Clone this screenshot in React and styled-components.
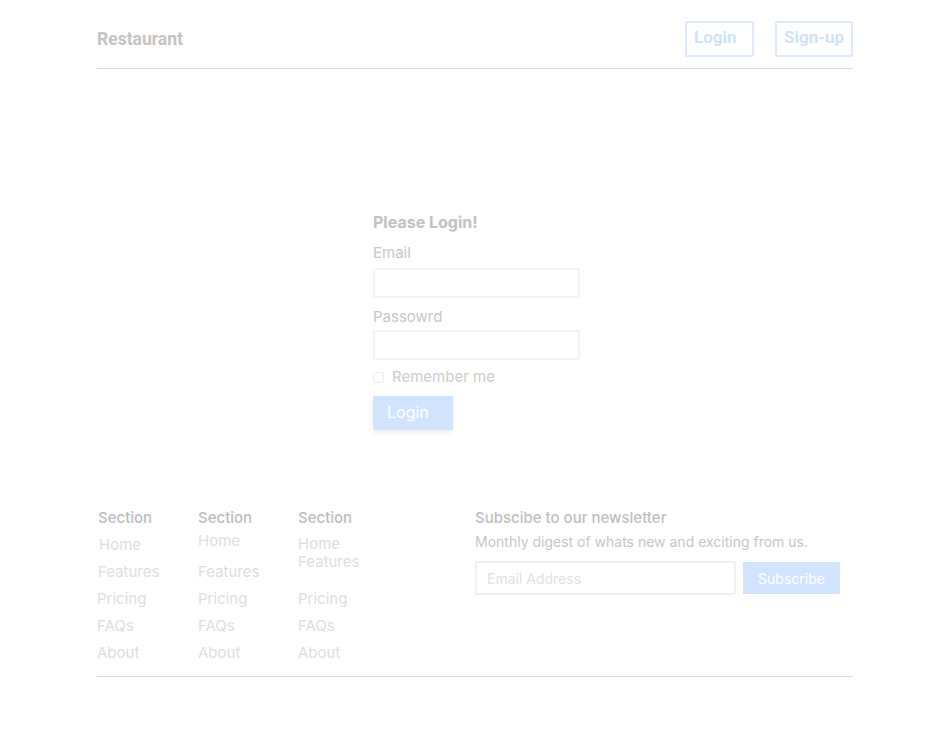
import React from 'react'
import styled, { createGlobalStyle } from 'styled-components'

const GlobalStyle = createGlobalStyle`
  body {
    margin: 0;
    background: #fff;
    font-family: Inter, 'Noto Sans', sans-serif;
  }
  * {
    box-sizing: border-box;
  }
`

const Page = styled.div`
  width: 756px;
  margin: 0 auto;
`

const Header = styled.header`
  display: flex;
  align-items: center;
  justify-content: space-between;
  padding: 21px 0 11px;
  border-bottom: 1px solid #dcdcdc;
`

const Brand = styled.div`
  font-family: Roboto, sans-serif;
  font-weight: 700;
  font-size: 17.5px;
  color: #c4c4c4;
`

const Nav = styled.div`
  display: flex;
  gap: 21px;
`

const NavButton = styled.button`
  width: ${(p) => p.$width}px;
  height: 36px;
  padding: 0 0 4px 7px;
  text-align: left;
  background: #fff;
  border: 2px solid #dde9fd;
  border-radius: 2px;
  font-family: Roboto, sans-serif;
  font-weight: 700;
  font-size: 17px;
  color: #d0e2fd;
`

const Main = styled.main`
  display: flex;
  justify-content: center;
  padding: 143px 0 0;
  height: 439px;
`

const Form = styled.form`
  width: 207px;
  margin-left: 3px;
  display: flex;
  flex-direction: column;
`

const Title = styled.div`
  font-size: 16px;
  line-height: 20px;
  font-weight: 700;
  color: #c2c2c2;
`

const Label = styled.label`
  font-size: 15px;
  line-height: 20px;
  color: #c8c8c8;
  margin-top: ${(p) => p.$top}px;
`

const Input = styled.input`
  height: 30px;
  width: 207px;
  margin-top: ${(p) => p.$top}px;
  border: 2px solid #f4f4f4;
  border-radius: 2px;
  outline: none;
`

const CheckRow = styled.div`
  display: flex;
  align-items: center;
  gap: 8px;
  margin-top: 7px;
  font-size: 15px;
  line-height: 20px;
  color: #cdcdcd;
`

const Box = styled.span`
  width: 11px;
  height: 11px;
  border: 1px solid #efefef;
  border-radius: 2px;
`

const Submit = styled.button`
  align-self: flex-start;
  width: 80px;
  height: 34px;
  margin-top: 9px;
  padding: 0 0 2px 14px;
  text-align: left;
  background: #d0e3ff;
  border: none;
  border-radius: 1px;
  box-shadow: 0 2px 6px rgba(0, 0, 0, 0.08);
  font-family: Inter, sans-serif;
  font-size: 16px;
  color: #fff;
`

const Footer = styled.footer`
  display: flex;
  padding-bottom: 6px;
  border-bottom: 1px solid #dcdcdc;
`

const Column = styled.div`
  width: 100px;
`

const ColTitle = styled.div`
  font-size: 15px;
  line-height: 20px;
  font-weight: 500;
  color: #bdbdbd;
  padding-left: 1px;
`

const Links = styled.ul`
  list-style: none;
  margin: 7px 0 0;
  padding: 0;
  width: 70px;
`

const LinkItem = styled.li`
  font-size: 15px;
  line-height: ${(p) => (p.$wrap ? 18 : 20)}px;
  height: ${(p) => (p.$wrap ? 54 : 27)}px;
  color: #dedede;
  padding-left: ${(p) => p.$indent || 0}px;
  margin-top: ${(p) => p.$shift || 0}px;
  margin-bottom: ${(p) => -(p.$shift || 0)}px;
`

const Newsletter = styled.div`
  margin-left: 78px;
`

const NewsTitle = styled.div`
  font-size: 15px;
  line-height: 20px;
  font-weight: 500;
  color: #c0c0c0;
`

const NewsText = styled.div`
  font-size: 14px;
  line-height: 20px;
  margin-top: 4px;
  color: #c6c6c6;
`

const NewsRow = styled.div`
  display: flex;
  align-items: center;
  gap: 7px;
  margin-top: 9px;
`

const NewsInput = styled.input`
  width: 261px;
  height: 34px;
  padding: 0 10px;
  border: 2px solid #f0f0f0;
  border-radius: 2px;
  font-family: Inter, sans-serif;
  font-size: 14px;
  outline: none;
  &::placeholder {
    color: #e2e2e2;
  }
`

const NewsButton = styled.button`
  width: 97px;
  height: 32px;
  background: #d0e3ff;
  border: none;
  border-radius: 1px;
  font-family: Inter, sans-serif;
  font-size: 14px;
  color: #fff;
`

const columns = [
  [
    { text: 'Home', indent: 2 },
    { text: 'Features', indent: 1 },
    { text: 'Pricing' },
    { text: 'FAQs' },
    { text: 'About' },
  ],
  [
    { text: 'Home', shift: -4, indent: 1 },
    { text: 'Features', indent: 1 },
    { text: 'Pricing', indent: 1 },
    { text: 'FAQs', indent: 1 },
    { text: 'About', indent: 1 },
  ],
  [
    { text: 'Home Features', wrap: true, indent: 1 },
    { text: 'Pricing', indent: 1 },
    { text: 'FAQs', indent: 1 },
    { text: 'About', indent: 1 },
  ],
]

export default function App() {
  return (
    <>
      <GlobalStyle />
      <Page>
        <Header>
          <Brand>Restaurant</Brand>
          <Nav>
            <NavButton $width={69}>Login</NavButton>
            <NavButton $width={78}>Sign-up</NavButton>
          </Nav>
        </Header>

        <Main>
          <Form onSubmit={(e) => e.preventDefault()}>
            <Title>Please Login!</Title>
            <Label $top={11}>Email</Label>
            <Input $top={5} />
            <Label $top={9}>Passowrd</Label>
            <Input $top={3} type="password" />
            <CheckRow>
              <Box />
              Remember me
            </CheckRow>
            <Submit>Login</Submit>
          </Form>
        </Main>

        <Footer>
          {columns.map((links, i) => (
            <Column key={i}>
              <ColTitle>Section</ColTitle>
              <Links>
                {links.map((l) => (
                  <LinkItem
                    key={l.text}
                    $wrap={l.wrap}
                    $indent={l.indent}
                    $shift={l.shift}
                  >
                    {l.text}
                  </LinkItem>
                ))}
              </Links>
            </Column>
          ))}
          <Newsletter>
            <NewsTitle>Subscibe to our newsletter</NewsTitle>
            <NewsText>Monthly digest of whats new and exciting from us.</NewsText>
            <NewsRow>
              <NewsInput placeholder="Email Address" />
              <NewsButton>Subscribe</NewsButton>
            </NewsRow>
          </Newsletter>
        </Footer>
      </Page>
    </>
  )
}
